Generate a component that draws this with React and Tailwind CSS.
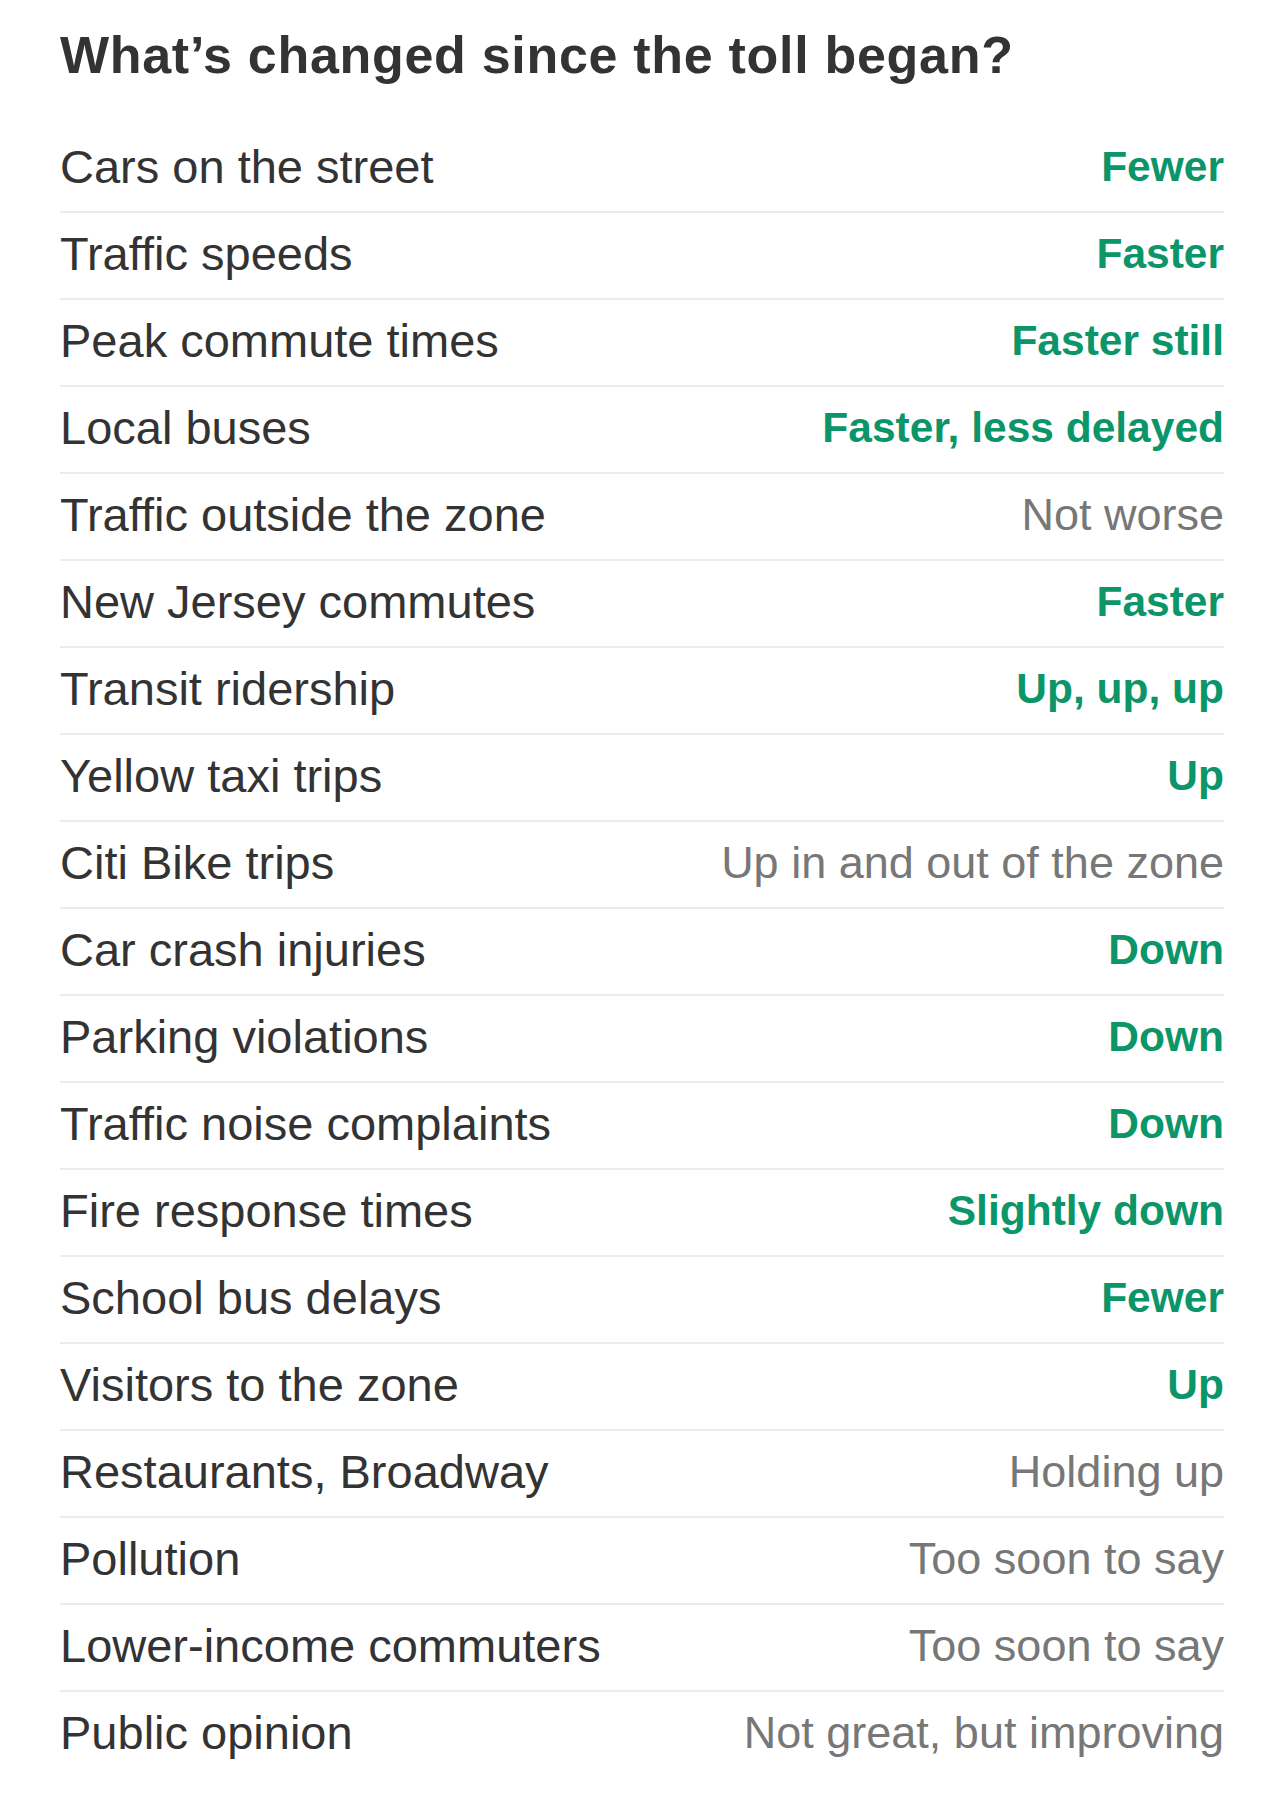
import React from "react";

const rows = [
  ["Cars on the street", "Fewer", true],
  ["Traffic speeds", "Faster", true],
  ["Peak commute times", "Faster still", true],
  ["Local buses", "Faster, less delayed", true],
  ["Traffic outside the zone", "Not worse", false],
  ["New Jersey commutes", "Faster", true],
  ["Transit ridership", "Up, up, up", true],
  ["Yellow taxi trips", "Up", true],
  ["Citi Bike trips", "Up in and out of the zone", false],
  ["Car crash injuries", "Down", true],
  ["Parking violations", "Down", true],
  ["Traffic noise complaints", "Down", true],
  ["Fire response times", "Slightly down", true],
  ["School bus delays", "Fewer", true],
  ["Visitors to the zone", "Up", true],
  ["Restaurants, Broadway", "Holding up", false],
  ["Pollution", "Too soon to say", false],
  ["Lower-income commuters", "Too soon to say", false],
  ["Public opinion", "Not great, but improving", false],
];

export default function App() {
  return (
    <div
      className="w-[1284px] min-h-[1811px] bg-white px-[60px] pt-[29px]"
      style={{ fontFamily: '"Liberation Sans", Arial, sans-serif' }}
    >
      <h1 className="text-[52px] leading-[52px] font-bold text-[#333333] tracking-[0.7px]">
        What’s changed since the toll began?
      </h1>
      <div className="mt-[45px] flex flex-col">
        {rows.map(([label, value, good], i) => (
          <div
            key={i}
            className={
              "flex h-[87px] items-center justify-between border-b-2 pb-[4px] " +
              (i < rows.length - 1 ? "border-[#ececec]" : "border-transparent")
            }
          >
            <div className="text-[47px] leading-[47px] text-[#333333]">{label}</div>
            {good ? (
              <div className="text-[42.5px] leading-[42px] font-bold text-[#0b9568]">{value}</div>
            ) : (
              <div className="text-[45px] leading-[45px] text-[#777777]">{value}</div>
            )}
          </div>
        ))}
      </div>
    </div>
  );
}
